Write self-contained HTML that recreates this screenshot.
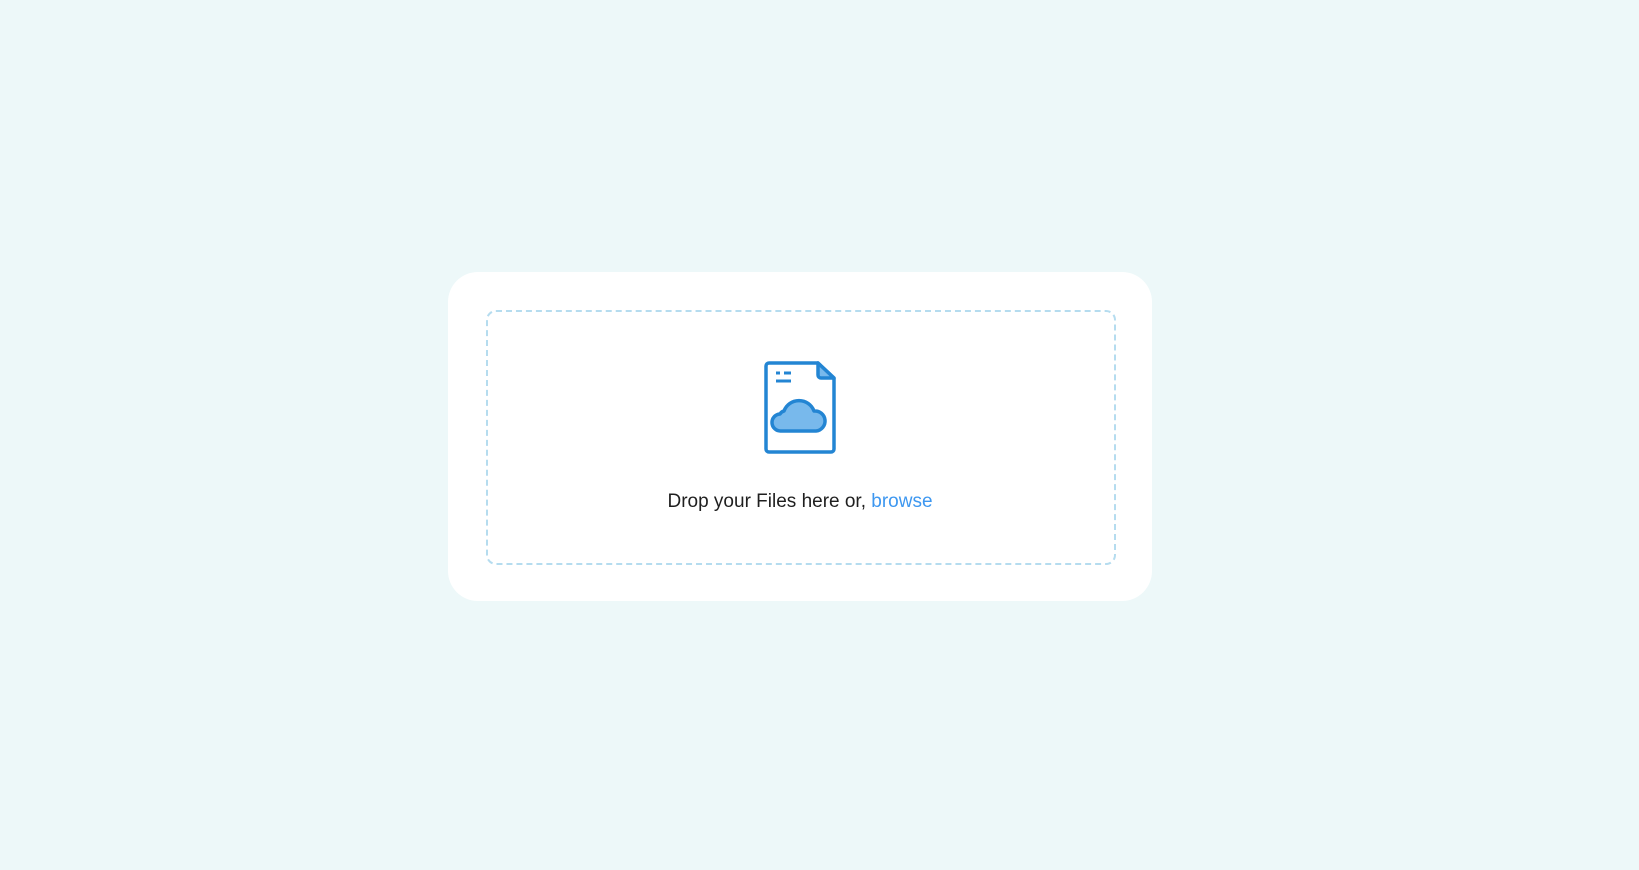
<!DOCTYPE html>
<html><head><style>
html,body{margin:0;padding:0;width:1639px;height:870px;background:#edf8f9;overflow:hidden}
.card{position:absolute;left:448px;top:272px;width:704px;height:329px;background:#fff;border-radius:30px}
.drop{position:absolute;left:486px;top:310px;width:626px;height:251px;border:2px dashed #b5dcef;border-radius:10px}
.txt{position:absolute;left:448px;width:704px;top:491px;text-align:center;font-family:"Liberation Sans",sans-serif;font-size:19px;color:#1f1f1f}
.txt span{color:#3d97f0}
svg{position:absolute;left:760px;top:358px}
</style></head><body>
<div class="card"></div>
<div class="drop"></div>
<svg width="80" height="100" viewBox="760 358 80 100">
<path d="M769 363 H818 L834 378 V449 a3 3 0 0 1 -3 3 H769 a3 3 0 0 1 -3 -3 V366 a3 3 0 0 1 3 -3 Z" fill="#fff" stroke="#2385d3" stroke-width="3.5" stroke-linejoin="round"/>
<path d="M818 363 V375 a3 3 0 0 0 3 3 H834 Z" fill="#78b9ec" stroke="#2385d3" stroke-width="3.5" stroke-linejoin="round"/>
<path d="M776 373 h4 M784 373 h7 M776 381 h15" stroke="#2385d3" stroke-width="3"/>
<path d="M781 431 a8.5 8.5 0 0 1 -1 -17 a6 6 0 0 1 4 -3 a16 16 0 0 1 30 0 a10 10 0 0 1 2 20 Z" fill="#78b9ec" stroke="#2385d3" stroke-width="3.5" stroke-linejoin="round"/>
</svg>
<div class="txt">Drop your Files here or, <span>browse</span></div>
</body></html>
